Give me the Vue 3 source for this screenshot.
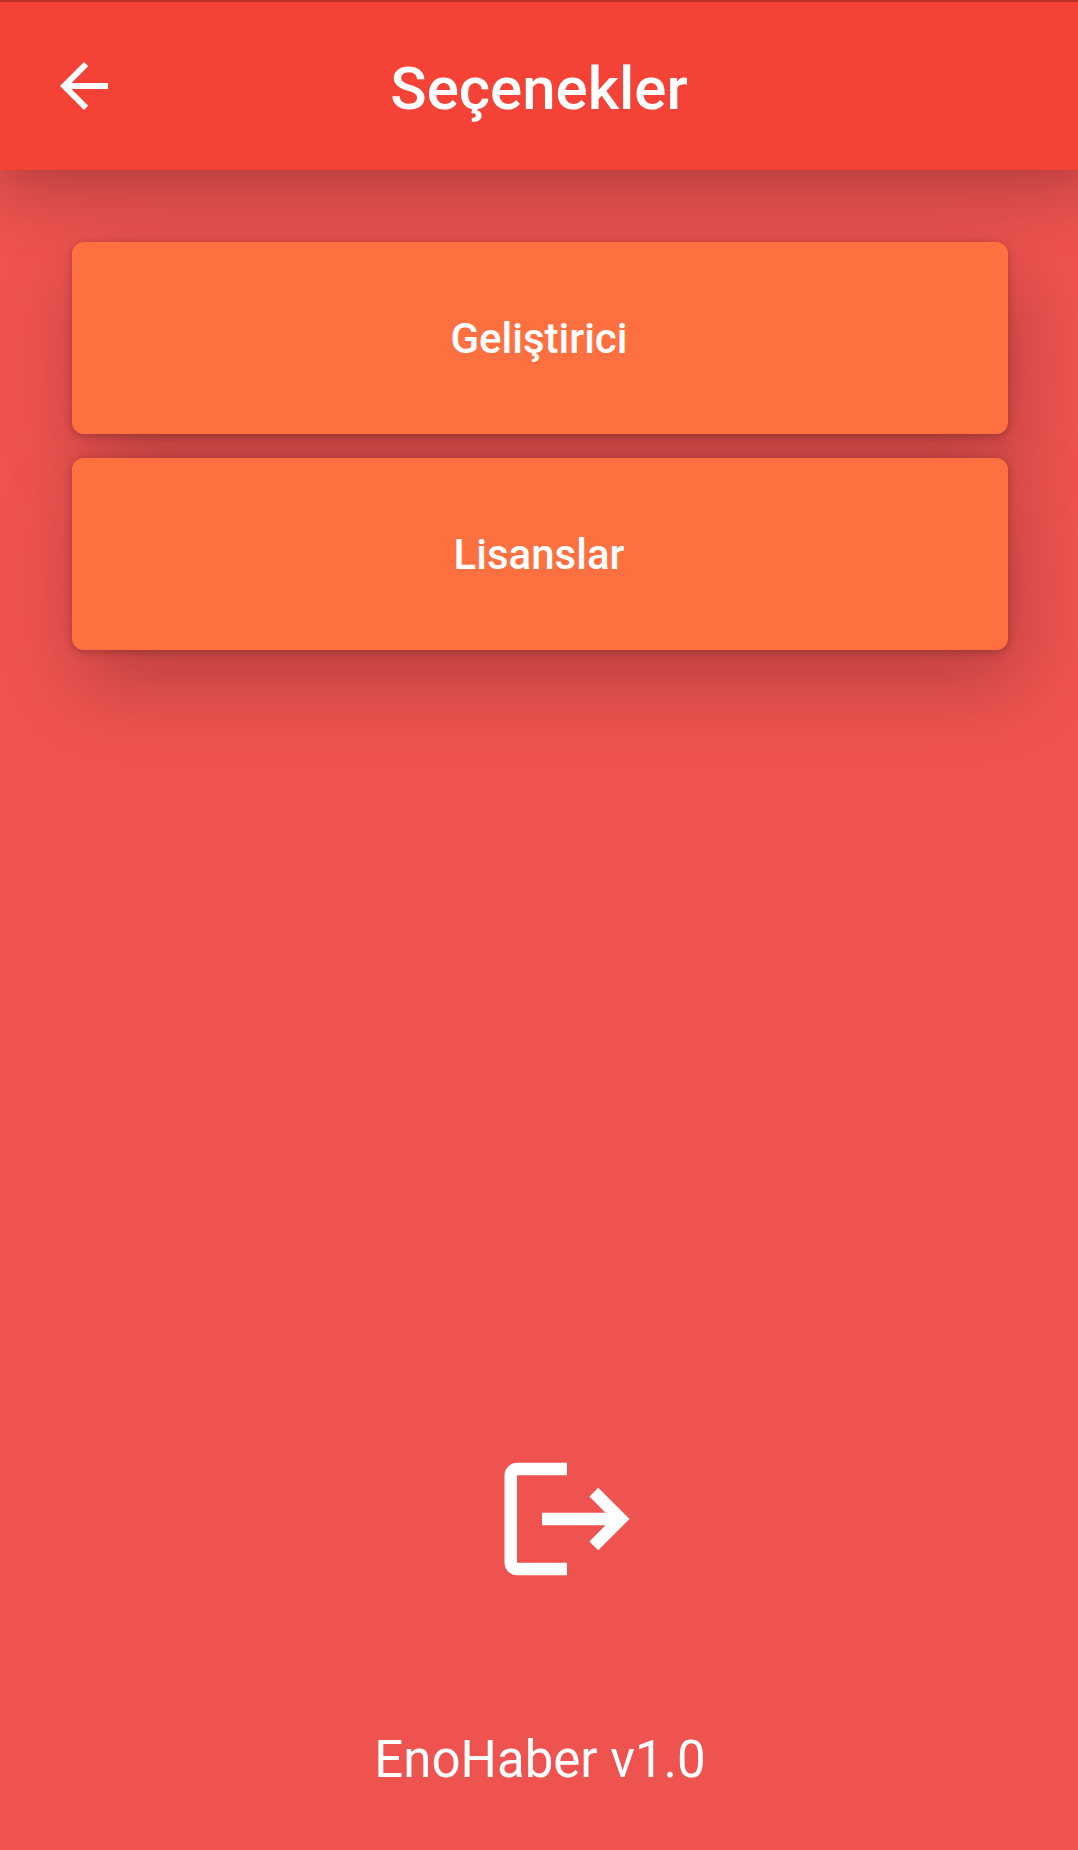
<script setup>
const options = ['Geliştirici', 'Lisanslar']
</script>

<template>
  <div class="page">
    <header class="app-bar">
      <button class="back" type="button" aria-label="Geri">
        <svg viewBox="0 0 24 24" aria-hidden="true">
          <path d="M20 11H7.83l5.59-5.59L12 4l-8 8 8 8 1.41-1.41L7.83 13H20v-2z" />
        </svg>
      </button>
      <h1 class="title">Seçenekler</h1>
    </header>

    <main class="content">
      <div class="options">
        <button v-for="option in options" :key="option" class="option" type="button">
          {{ option }}
        </button>
      </div>

      <div class="bottom">
        <button class="logout" type="button" aria-label="Çıkış">
          <svg viewBox="0 0 24 24" aria-hidden="true">
            <path d="M17 7l-1.41 1.41L18.17 11H8v2h10.17l-2.58 2.58L17 17l5-5zM4 5h8V3H4c-1.1 0-2 .9-2 2v14c0 1.1.9 2 2 2h8v-2H4V5z" />
          </svg>
        </button>
        <p class="version">EnoHaber v1.0</p>
      </div>
    </main>
  </div>
</template>

<style>
body {
  margin: 0;
  background: #ef5350;
}
</style>

<style scoped>
.page {
  display: flex;
  flex-direction: column;
  min-height: 100vh;
  overflow: hidden;
  color: #fff;
  background: #ef5350;
  font-family: Roboto, "Liberation Sans", sans-serif;
}

button {
  margin: 0;
  border: 0;
  color: inherit;
  font-family: inherit;
  cursor: pointer;
}

svg {
  display: block;
  flex: none;
  fill: currentColor;
}

.app-bar {
  display: grid;
  grid-template-columns: 72px 1fr 72px;
  align-items: center;
  height: 168px;
  padding: 0 48px;
  border-top: 2px solid #b73228;
  background: #f44336;
  box-shadow:
    4px 4px 18px rgba(0, 0, 0, 0.06),
    8px 16px 66px 12px rgba(0, 0, 0, 0.2);
}

.back {
  padding: 0;
  background: none;
}

.back svg {
  width: 72px;
  height: 72px;
}

.title {
  margin: 0;
  padding-top: 6px;
  font-size: 60px;
  font-weight: 500;
  line-height: 72px;
  text-align: center;
}

.content {
  display: flex;
  flex: 1;
  flex-direction: column;
  justify-content: space-between;
  padding: 72px 70px 60px 72px;
}

.options {
  display: flex;
  flex-direction: column;
  gap: 24px;
  isolation: isolate;
}

.option {
  position: relative;
  height: 192px;
  padding: 2px 2px 0 0;
  border-radius: 12px;
  background: #ff7040;
  font-size: 42px;
  font-weight: 500;
  line-height: 48px;
}

/* The shadow sits on its own layer so that it never darkens a neighbouring button. */
.option::before {
  content: "";
  position: absolute;
  inset: 0;
  z-index: -1;
  border-radius: 12px;
  box-shadow:
    0 2px 8px rgba(0, 0, 0, 0.24),
    10px 32px 80px 2px rgba(0, 0, 0, 0.22);
}

.bottom {
  display: flex;
  flex-direction: column;
  align-items: center;
  gap: 136px;
}

.logout {
  display: flex;
  width: 144px;
  padding: 0 0 0 24px;
  background: none;
}

.logout svg {
  width: 150px;
  height: 150px;
}

.version {
  margin: 0;
  font-size: 51px;
  line-height: 60px;
}
</style>
